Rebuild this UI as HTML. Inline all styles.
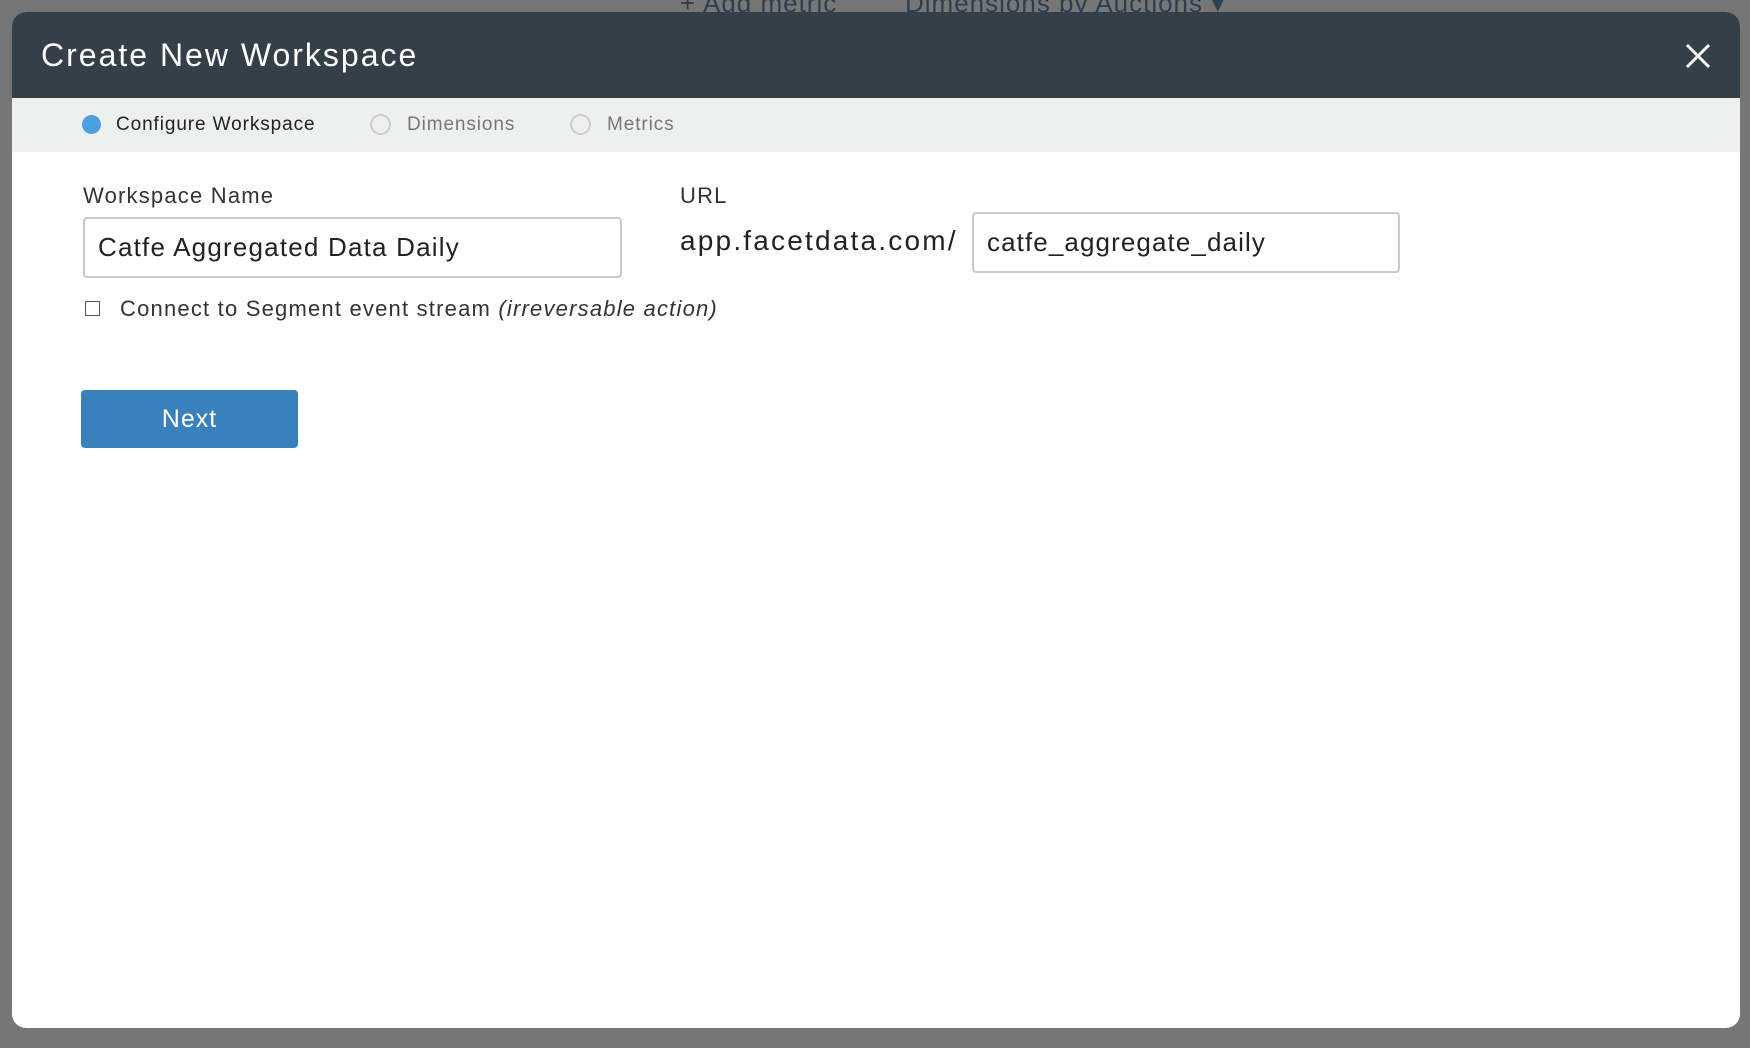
<!DOCTYPE html>
<html><head><style>
body{margin:0;width:1750px;height:1048px;background:#767676;position:relative;overflow:hidden;font-family:"Liberation Sans",sans-serif}
.bgtext{position:absolute;top:-12px;color:#2d3e50;font-size:26px;letter-spacing:1px}
.modal{position:absolute;left:12px;top:12px;width:1728px;height:1016px;background:#fff;border-radius:14px;overflow:hidden}
.hdr{height:86px;background:#353f4a;position:relative}
.hdr h1{margin:0;position:absolute;left:29px;top:25px;font-weight:normal;color:#fff;font-size:32px;letter-spacing:2px}
.step{height:54px;background:#eef0ef;position:relative}
.ab{position:absolute}
.dot{width:19px;height:19px;border-radius:50%;top:17px}
.st{top:16px;font-size:19px;letter-spacing:0.9px}
.inp{position:absolute;border:2px solid #c9c9c9;border-radius:4px;box-sizing:border-box;font-size:26px;color:#222;padding-left:13px;letter-spacing:1.2px}
</style></head><body>
<div class="bgtext" style="left:680px">+ Add metric</div>
<div class="bgtext" style="left:905px">Dimensions by Auctions ▾</div>
<div class="modal">
 <div class="hdr"><h1>Create New Workspace</h1>
  <svg class="ab" style="left:1673px;top:31px" width="26" height="26" viewBox="0 0 26 26"><path d="M2 2L24 24M24 2L2 24" stroke="#fff" stroke-width="3"/></svg>
 </div>
 <div class="step">
  <div class="ab dot" style="left:70px;background:#4a9fdf"></div>
  <div class="ab st" style="left:104px;color:#222">Configure Workspace</div>
  <div class="ab dot" style="left:358px;border:2px solid #ccc;box-sizing:border-box;width:21px;height:21px;top:16px"></div>
  <div class="ab st" style="left:395px;color:#777">Dimensions</div>
  <div class="ab dot" style="left:558px;border:2px solid #ccc;box-sizing:border-box;width:21px;height:21px;top:16px"></div>
  <div class="ab st" style="left:595px;color:#777">Metrics</div>
 </div>
 <div class="ab" style="left:71px;top:171px;font-size:22px;color:#333;letter-spacing:1.2px">Workspace Name</div>
 <div class="inp" style="left:71px;top:205px;width:539px;height:61px;line-height:57px">Catfe Aggregated Data Daily</div>
 <div class="ab" style="left:668px;top:171px;font-size:22px;color:#333;letter-spacing:1.2px">URL</div>
 <div class="ab" style="left:668px;top:213px;font-size:28px;color:#222;letter-spacing:2.2px">app.facetdata.com/</div>
 <div class="inp" style="left:960px;top:200px;width:428px;height:61px;line-height:57px;letter-spacing:1.1px">catfe_aggregate_daily</div>
 <div class="ab" style="left:73px;top:289px;width:13px;height:13px;border:1.5px solid #555"></div>
 <div class="ab" style="left:108px;top:284px;font-size:22px;color:#333;letter-spacing:1.2px">Connect to Segment event stream <i>(irreversable action)</i></div>
 <div class="ab" style="left:69px;top:378px;width:217px;height:58px;background:#3a80bd;border-radius:4px;color:#fff;font-size:25px;text-align:center;line-height:58px;letter-spacing:1px">Next</div>
</div>
</body></html>
